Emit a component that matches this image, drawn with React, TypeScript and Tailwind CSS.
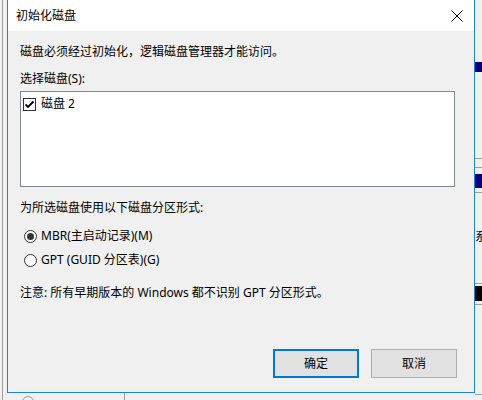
import React from "react";

const font = {
  fontFamily: '"Segoe UI", "Noto Sans", "Noto Sans CJK SC", sans-serif',
};

function CheckBox() {
  return (
    <div className="w-[13px] h-[13px] border border-[#333333] bg-white flex items-center justify-center">
      <svg width="11" height="11" viewBox="0 0 11 11">
        <path d="M1.5 5.5 L4 8 L9.5 2.5" stroke="#000" strokeWidth="1.8" fill="none" />
      </svg>
    </div>
  );
}

function Radio({ checked }: { checked?: boolean }) {
  return (
    <div className="w-[13px] h-[13px] rounded-full border border-[#333333] bg-white flex items-center justify-center">
      {checked && <div className="w-[7px] h-[7px] rounded-full bg-[#333333]" />}
    </div>
  );
}

export default function App() {
  return (
    <div className="relative w-[482px] h-[400px] bg-[#f0f0f0] overflow-hidden text-[12px] text-black" style={font}>
      {/* background window bits */}
      <div className="absolute left-[2px] top-0 w-px h-[400px] bg-[#a0a0a0]" />
      <div className="absolute left-[475px] top-[62px] w-[7px] h-[10px] bg-[#000080]" />
      <div className="absolute left-[475px] top-[158px] w-[7px] h-px bg-[#a0a0a0]" />
      <div className="absolute left-[475px] top-[167px] w-[7px] h-px bg-[#a0a0a0]" />
      <div className="absolute left-[475px] top-[174px] w-[7px] h-[14px] bg-[#000080]" />
      <div className="absolute left-[475px] top-[192px] w-[7px] h-px bg-[#a0a0a0]" />
      <div className="absolute left-[475px] top-[229px] text-[12px] leading-[16px]">系</div>
      <div className="absolute left-[475px] top-[283px] w-[7px] h-px bg-[#a0a0a0]" />
      <div className="absolute left-[475px] top-[286px] w-[7px] h-[15px] bg-black" />
      <div className="absolute left-[475px] top-[304px] w-[7px] h-px bg-[#a0a0a0]" />
      <div className="absolute left-[475px] top-[394px] w-[7px] h-px bg-[#a0a0a0]" />
      <div className="absolute left-[22px] top-[396px] w-[12px] h-[12px] rounded-full border border-[#999]" />
      <div className="absolute left-[124px] top-[393px] w-px h-[7px] bg-[#a0a0a0]" />

      {/* dialog */}
      <div className="absolute left-[7px] top-0 w-[468px] h-[393px] border-l border-r border-b border-[#1883d7] bg-[#f0f0f0] flex flex-col">
        <div className="h-[31px] bg-white flex items-center justify-between pl-[8px] pr-[8px]">
          <span className="leading-[16px]">初始化磁盘</span>
          <svg width="12" height="12" viewBox="0 0 12 12" className="mr-[3px]">
            <path d="M0.5 0.5 L11.5 11.5 M11.5 0.5 L0.5 11.5" stroke="#000" strokeWidth="1" />
          </svg>
        </div>
        <div className="flex flex-col px-[12px]">
          <div className="mt-[13px] leading-[16px]">磁盘必须经过初始化，逻辑磁盘管理器才能访问。</div>
          <div className="mt-[11px] leading-[16px]">选择磁盘(S):</div>
          <div className="mt-[4px] h-[96px] w-[435px] border border-[#828790] bg-white pl-[2px] pt-[4px]">
            <div className="flex items-center gap-[5px] h-[16px]">
              <CheckBox />
              <span className="leading-[16px]">磁盘 2</span>
            </div>
          </div>
          <div className="mt-[13px] leading-[16px]">为所选磁盘使用以下磁盘分区形式:</div>
          <div className="mt-[12px] flex items-center gap-[4px] h-[16px] pl-[4px]">
            <Radio checked />
            <span className="leading-[16px]">MBR(主启动记录)(M)</span>
          </div>
          <div className="mt-[8px] flex items-center gap-[4px] h-[16px] pl-[4px]">
            <Radio />
            <span className="leading-[16px]">GPT (GUID 分区表)(G)</span>
          </div>
          <div className="mt-[17px] leading-[16px]">注意: 所有早期版本的 Windows 都不识别 GPT 分区形式。</div>
          <div className="mt-[48px] flex justify-end gap-[12px] mr-[5px]">
            <button className="w-[86px] h-[29px] border-2 border-[#0078d7] bg-[#e1e1e1] leading-[16px]">确定</button>
            <button className="w-[86px] h-[29px] border border-[#adadad] bg-[#e1e1e1] leading-[16px]">取消</button>
          </div>
        </div>
      </div>
    </div>
  );
}
